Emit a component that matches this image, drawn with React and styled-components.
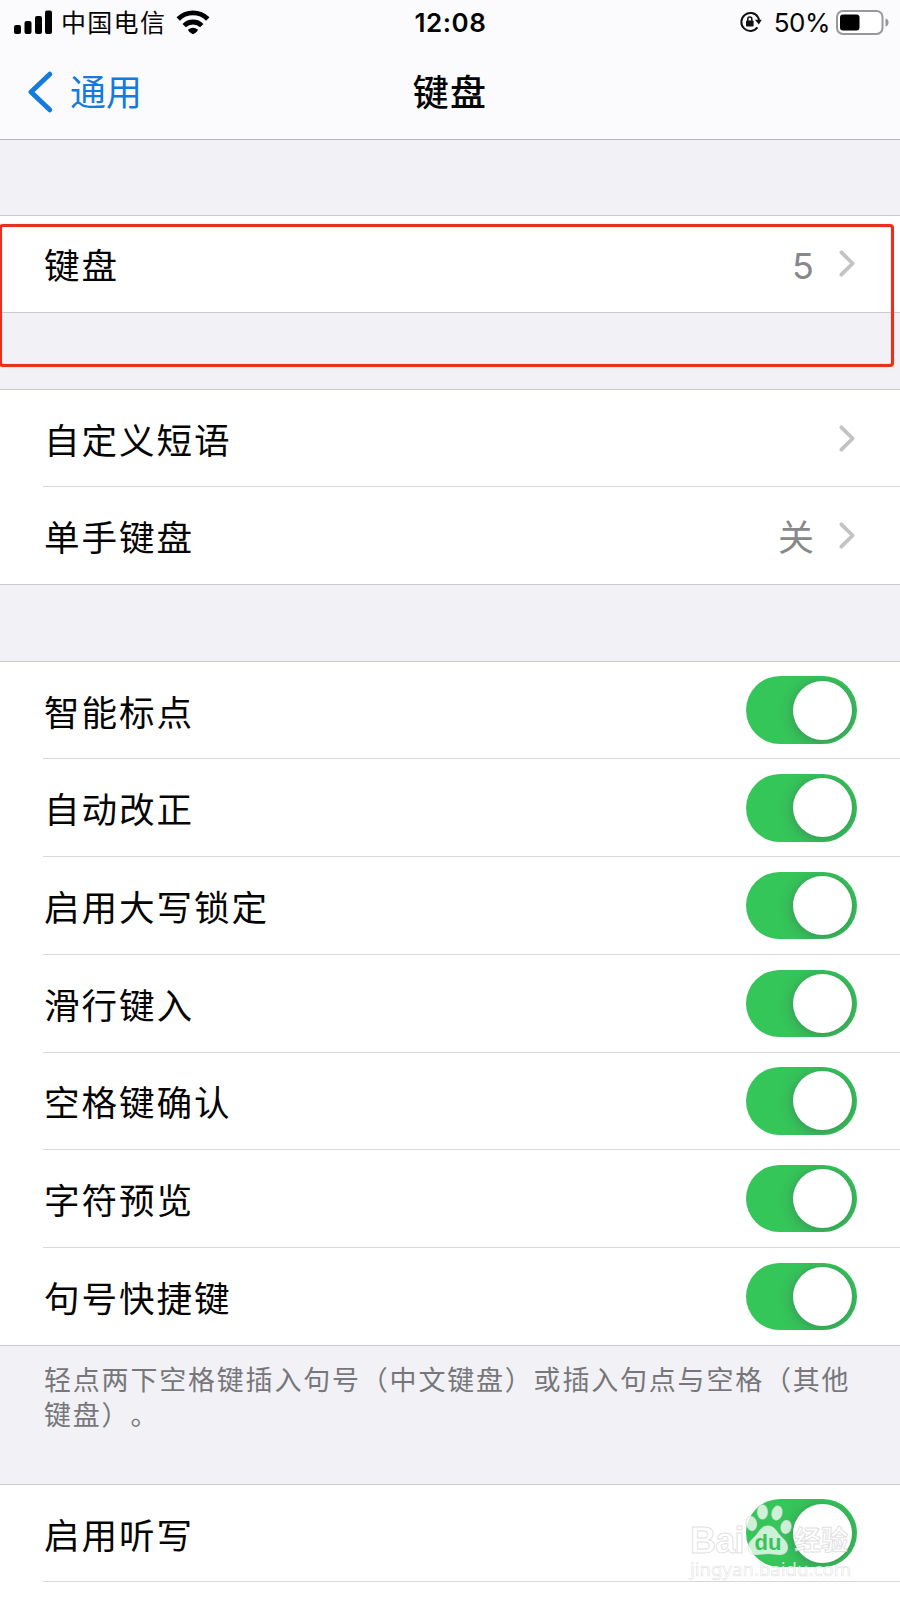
import React, { useState } from 'react'
import styled, { createGlobalStyle } from 'styled-components'

const GlobalStyle = createGlobalStyle`
    * {
        box-sizing: border-box;
    }

    body {
        margin: 0;
        background: #fff;
    }
`

const Page = styled.div`
    position: relative;
    width: 900px;
    height: 1600px;
    overflow: hidden;
    background: #fff;
    color: #050505;
    font-family: Inter, 'Noto Sans CJK SC', sans-serif;
    text-spacing-trim: space-all;
`

const Header = styled.header`
    height: 140px;
    background: #fbfbfd;
    border-bottom: 1px solid #b8b8bb;
`

const StatusBar = styled.div`
    display: grid;
    grid-template-columns: 1fr auto 1fr;
    align-items: center;
    height: 44px;
    padding: 0 11px 0 14px;

    .left,
    .right {
        display: flex;
        align-items: center;
    }

    .right {
        justify-content: flex-end;
    }

    .carrier {
        margin: 2px 10px 0 8px;
        font-size: 25px;
        line-height: 30px;
        letter-spacing: 1.3px;
    }

    .time {
        margin: 2px 2px 0 0;
        font-size: 26px;
        font-weight: 600;
        line-height: 30px;
        letter-spacing: 0.5px;
    }

    .percent {
        margin: 2px 6px 0 11px;
        font-size: 26px;
        line-height: 30px;
        letter-spacing: -0.5px;
    }
`

const NavBar = styled.nav`
    display: grid;
    grid-template-columns: 1fr auto 1fr;
    align-items: center;
    height: 95px;
    padding: 0 28px;

    .title {
        padding-top: 2px;
        font-size: 36px;
        font-weight: 500;
        line-height: 48px;
        letter-spacing: 1.2px;
    }
`

const BackLink = styled.a`
    display: flex;
    align-items: center;
    gap: 17px;
    color: #147bdc;
    font-size: 36px;
    line-height: 48px;
    cursor: pointer;

    span {
        padding-top: 2px;
    }
`

const Gap = styled.div`
    height: ${props => props.$size}px;
    background: #f1f1f6;
`

const Footnote = styled.div`
    height: 138px;
    padding: 17px 40px 0 44px;
    background: #f1f1f6;
    color: #77777b;
    font-size: 27px;
    line-height: 35px;
    letter-spacing: 1.8px;
`

const Group = styled.section`
    border-top: 1px solid #cbcbce;
`

const StyledRow = styled.div`
    display: flex;
    height: 97.72px;
    padding-left: ${props => (props.$last ? 0 : 43)}px;

    .content {
        flex: 1;
        display: flex;
        align-items: center;
        padding: 0 43px 0 ${props => (props.$last ? 44 : 1)}px;
        border-bottom: 1px solid ${props => (props.$last ? '#cbcbce' : '#d9d9dc')};
    }

    .label {
        flex: 1;
        padding-top: 7px;
        font-size: 35.6px;
        line-height: 48px;
        letter-spacing: 1.9px;
    }

    .value {
        margin-right: 25px;
        padding-top: 5px;
        color: #88888b;
        font-size: 36px;
        line-height: 48px;
    }

    .arrow {
        margin-right: 2px;
    }
`

const StyledSwitch = styled.button`
    display: flex;
    justify-content: ${props => (props.$on ? 'flex-end' : 'flex-start')};
    align-items: center;
    width: 111px;
    height: 67.5px;
    padding: 0 5px;
    border: 0;
    border-radius: 34px;
    background: ${props => (props.$on ? '#35c65a' : '#e9e9eb')};
    overflow: hidden;
    cursor: pointer;

    span {
        width: 59px;
        height: 59px;
        border-radius: 50%;
        background: #fff;
        box-shadow: 0 2px 14px rgba(70, 60, 80, 0.42);
    }
`

const Highlight = styled.div`
    position: absolute;
    top: 224px;
    left: -1px;
    width: 895px;
    height: 143px;
    border: 3px solid #e8301f;
    border-radius: 4px;
    box-shadow: 0 0 1px #ff6a5c, inset 0 0 1px #ff6a5c;
    pointer-events: none;
`

const StyledWatermark = styled.div`
    position: absolute;
    top: 1501px;
    left: 690px;
    width: 180px;
    color: rgba(255, 255, 255, 0.75);
    font-family: 'Liberation Sans', 'Noto Sans CJK SC', sans-serif;
    pointer-events: none;

    .brand {
        display: flex;
        height: 57px;
        font-weight: 700;
    }

    .bai {
        width: 54px;
        padding-top: 23px;
        font-size: 36px;
        line-height: 34px;
        letter-spacing: -0.8px;
        -webkit-text-stroke: 1px rgba(175, 175, 180, 0.4);
    }

    .cn {
        margin-left: 2px;
        padding-top: 24px;
        font-size: 27px;
        line-height: 32px;
        -webkit-text-stroke: 1px rgba(175, 175, 180, 0.4);
    }

    .url {
        font-family: 'Noto Sans', sans-serif;
        font-size: 18.6px;
        line-height: 22px;
        white-space: nowrap;
        -webkit-text-stroke: 0.6px rgba(175, 175, 180, 0.4);
    }
`

function Signal() {
    return (
        <svg width="39" height="24" viewBox="0 0 39 24">
            <rect x="0" y="15" width="7" height="9" rx="2" />
            <rect x="10.5" y="11" width="7" height="13" rx="2" />
            <rect x="21" y="6" width="7" height="18" rx="2" />
            <rect x="31" y="0.5" width="7" height="23.5" rx="2" />
        </svg>
    )
}

function Wifi() {
    return (
        <svg width="34" height="25" viewBox="0 0 34 25" fill="none" stroke="#000" strokeWidth="4.8">
            <path d="M2.2 9a21 21 0 0 1 29.6 0" />
            <path d="M8.2 15.6a12.5 12.5 0 0 1 17.6 0" />
            <path d="M12.2 19.5q4.8-3.6 9.6 0q.4 2-4.8 4.8q-5.2-2.8-4.8-4.8z" fill="#000" stroke="none" />
        </svg>
    )
}

function RotationLock() {
    return (
        <svg width="24" height="22" viewBox="0 0 24 22">
            <path d="M18.5 16.4a9 9 0 1 1 .5-10.2q.8 1.2 1 3" fill="none" stroke="#111" strokeWidth="2" />
            <path d="M16 8.8h6.8l-3 4.8z" fill="#111" />
            <rect x="7" y="9.5" width="7.6" height="6" rx="1" fill="#111" />
            <path d="M8.8 10V8a2 2 0 0 1 4 0v2" fill="none" stroke="#111" strokeWidth="1.5" />
        </svg>
    )
}

function Battery() {
    return (
        <svg width="53" height="25" viewBox="0 0 53 25">
            <rect x="1" y="1" width="45.5" height="23" rx="6" fill="#fff" stroke="#99999b" strokeWidth="2" />
            <rect x="4" y="4.5" width="19.5" height="16" rx="3" />
            <path d="M49.5 8.5q3 .6 3 4t-3 4z" fill="#99999b" />
        </svg>
    )
}

function BackChevron() {
    return (
        <svg width="25" height="42" viewBox="0 0 25 42" fill="none" stroke="#147bdc" strokeWidth="5" strokeLinecap="round" strokeLinejoin="round">
            <path d="M21.7 3.2L3 21l18.7 17.8" />
        </svg>
    )
}

function Arrow() {
    return (
        <svg className="arrow" width="16" height="27" viewBox="0 0 16 27" fill="none" stroke="#c3c3c5" strokeWidth="3.8" strokeLinecap="round" strokeLinejoin="round">
            <path d="M2.4 2.3l11.2 11.2L2.4 24.7" />
        </svg>
    )
}

function Row({ label, last, children }) {
    return (
        <StyledRow $last={last}>
            <div className="content">
                <span className="label">{label}</span>
                {children}
            </div>
        </StyledRow>
    )
}

function Switch() {
    const [on, setOn] = useState(true)

    return (
        <StyledSwitch $on={on} onClick={() => setOn(!on)}>
            <span />
        </StyledSwitch>
    )
}

function Watermark() {
    return (
        <StyledWatermark>
            <div className="brand">
                <span className="bai">Bai</span>
                <svg width="48" height="57" viewBox="0 0 48 57">
                    <g fill="#fff" fillOpacity="0.75" stroke="#aaaaaf" strokeOpacity="0.35">
                        <ellipse cx="7.5" cy="22.5" rx="5.5" ry="7.5" transform="rotate(-10 7.5 22.5)" />
                        <ellipse cx="18.5" cy="11" rx="5.5" ry="7.5" />
                        <ellipse cx="33" cy="12" rx="5.5" ry="7.5" transform="rotate(14 33 12)" />
                        <ellipse cx="42" cy="26" rx="5.5" ry="7" transform="rotate(10 42 26)" />
                        <path d="M24 24.5c6.5 0 8.5 5.5 12 9.5s8 6.5 8 12.5c0 5-4 7.8-9 7.5-4-.3-7-1-11-1s-7 .7-11 1c-5 .3-9-2.5-9-7.5 0-6 4.5-8.500 8-12.5s5.500-9.5 12-9.5z" />
                    </g>
                    <text x="24" y="49" textAnchor="middle" fontSize="22" fontWeight="700" fill="#38c35c">du</text>
                </svg>
                <span className="cn">经验</span>
            </div>
            <div className="url">jingyan.baidu.com</div>
        </StyledWatermark>
    )
}

const toggles = ['智能标点', '自动改正', '启用大写锁定', '滑行键入', '空格键确认', '字符预览', '句号快捷键']

export default function App() {
    return (
        <Page>
            <GlobalStyle />
            <Header>
                <StatusBar>
                    <div className="left">
                        <Signal />
                        <span className="carrier">中国电信</span>
                        <Wifi />
                    </div>
                    <span className="time">12:08</span>
                    <div className="right">
                        <RotationLock />
                        <span className="percent">50%</span>
                        <Battery />
                    </div>
                </StatusBar>
                <NavBar>
                    <BackLink>
                        <BackChevron />
                        <span>通用</span>
                    </BackLink>
                    <span className="title">键盘</span>
                </NavBar>
            </Header>

            <Gap $size={74.6} />
            <Group>
                <Row label="键盘" last>
                    <span className="value">5</span>
                    <Arrow />
                </Row>
            </Group>

            <Gap $size={75.4} />
            <Group>
                <Row label="自定义短语">
                    <Arrow />
                </Row>
                <Row label="单手键盘" last>
                    <span className="value">关</span>
                    <Arrow />
                </Row>
            </Group>

            <Gap $size={75.6} />
            <Group>
                {toggles.map((label, i) => (
                    <Row key={label} label={label} last={i === toggles.length - 1}>
                        <Switch />
                    </Row>
                ))}
            </Group>

            <Footnote>轻点两下空格键插入句号（中文键盘）或插入句点与空格（其他键盘）。</Footnote>
            <Group>
                <Row label="启用听写">
                    <Switch />
                </Row>
            </Group>

            <Highlight />
            <Watermark />
        </Page>
    )
}
